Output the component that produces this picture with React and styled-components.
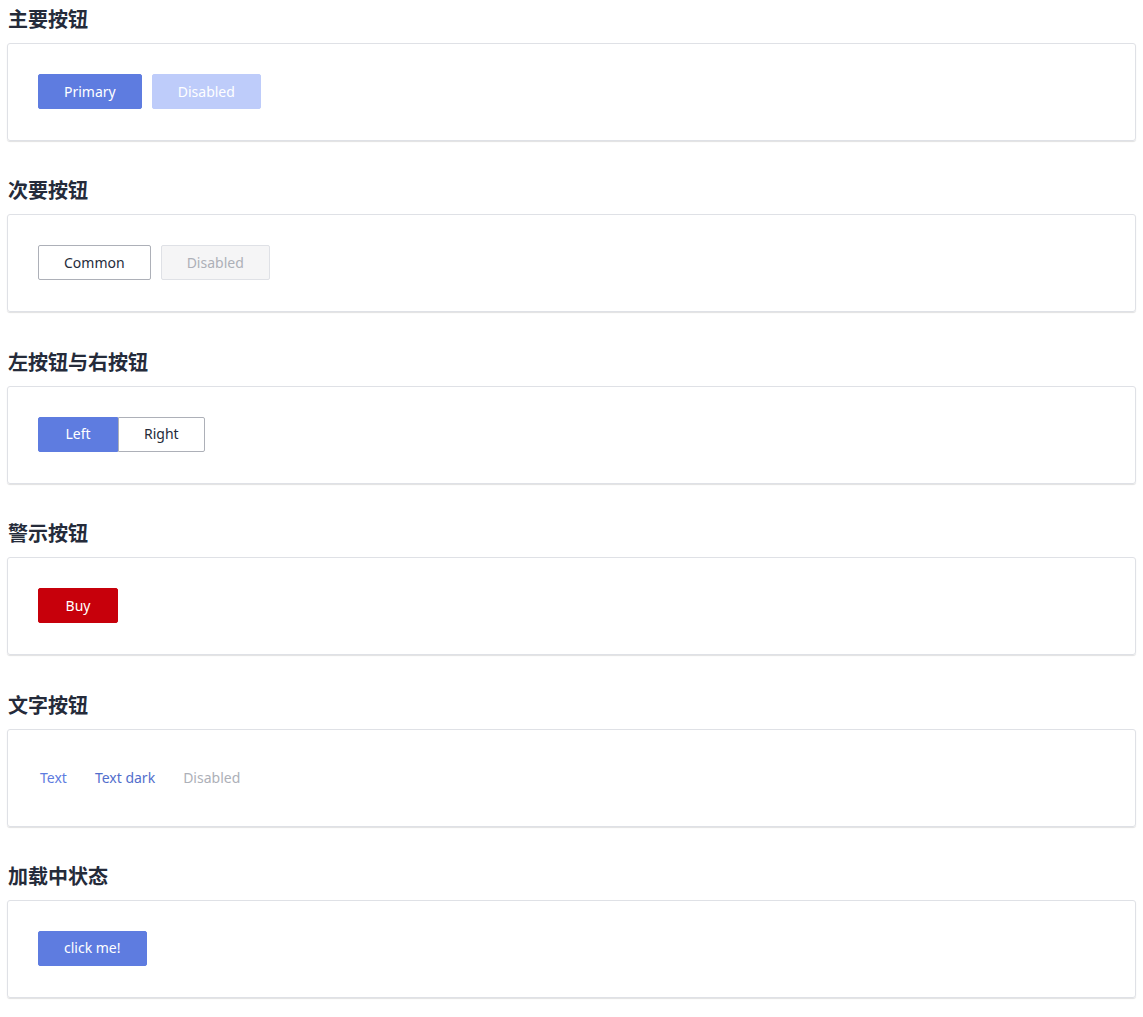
import React from "react";
import styled, { createGlobalStyle, css } from "styled-components";

const Global = createGlobalStyle`
  html, body { margin: 0; padding: 0; background: #fff; }
  body {
    font-family: "Noto Sans", "Noto Sans CJK SC", sans-serif;
    color: #252b3a;
  }
`;

const Page = styled.div`
  padding: 7px 7px 20px 7px;
  display: flex;
  flex-direction: column;
  gap: 37.4px;
`;

const Section = styled.section`
  display: flex;
  flex-direction: column;
  gap: 12px;
`;

const Title = styled.h3`
  margin: 0;
  font-family: "Noto Sans CJK SC", sans-serif;
  font-size: 20px;
  line-height: 24px;
  font-weight: 700;
  color: #252b3a;
  padding-left: 1px;
`;

const Card = styled.div`
  border: 1px solid #dfe1e6;
  border-radius: 3px;
  box-shadow: 0 1px 1px rgba(0, 0, 0, 0.12);
  padding: 30px 30px 31px 30px;
  display: flex;
  align-items: center;
  gap: ${(p) => p.$gap ?? 10}px;
`;

const variants = {
  primary: css`
    background: #5e7ce0;
    border-color: #5e7ce0;
    color: #fff;
  `,
  primaryDisabled: css`
    background: #beccfa;
    border-color: #beccfa;
    color: #fff;
  `,
  common: css`
    background: #fff;
    border-color: #adb0b8;
    color: #252b3a;
  `,
  commonDisabled: css`
    background: #f5f5f6;
    border-color: #dfe1e6;
    color: #adb0b8;
  `,
  danger: css`
    background: #c7000b;
    border-color: #c7000b;
    color: #fff;
  `,
};

const Button = styled.button`
  box-sizing: border-box;
  height: 35px;
  min-width: 80px;
  padding: 0 25px;
  border: 1px solid transparent;
  border-radius: 2px;
  font-family: "Noto Sans", "Noto Sans CJK SC", sans-serif;
  font-size: 14px;
  line-height: 1;
  cursor: pointer;
  ${(p) => variants[p.$variant]}
  ${(p) =>
    p.$left &&
    css`
      border-top-right-radius: 0;
      border-bottom-right-radius: 0;
    `}
  ${(p) =>
    p.$right &&
    css`
      border-top-left-radius: 0;
      border-bottom-left-radius: 0;
    `}
`;

const TextButton = styled.button`
  background: none;
  border: none;
  height: 35px;
  padding: 0 2px;
  font-family: "Noto Sans", "Noto Sans CJK SC", sans-serif;
  font-size: 14px;
  color: ${(p) => (p.$disabled ? "#adb0b8" : p.$dark ? "#526ecc" : "#5e7ce0")};
  cursor: ${(p) => (p.$disabled ? "not-allowed" : "pointer")};
`;

const Group = styled.div`
  display: flex;
`;

export default function App() {
  return (
    <>
      <Global />
      <Page>
        <Section>
          <Title>主要按钮</Title>
          <Card>
            <Button $variant="primary">Primary</Button>
            <Button $variant="primaryDisabled">Disabled</Button>
          </Card>
        </Section>
        <Section>
          <Title>次要按钮</Title>
          <Card>
            <Button $variant="common">Common</Button>
            <Button $variant="commonDisabled">Disabled</Button>
          </Card>
        </Section>
        <Section>
          <Title>左按钮与右按钮</Title>
          <Card>
            <Group>
              <Button $variant="primary" $left>Left</Button>
              <Button $variant="common" $right>Right</Button>
            </Group>
          </Card>
        </Section>
        <Section>
          <Title>警示按钮</Title>
          <Card>
            <Button $variant="danger">Buy</Button>
          </Card>
        </Section>
        <Section>
          <Title>文字按钮</Title>
          <Card $gap={24}>
            <TextButton>Text</TextButton>
            <TextButton $dark>Text dark</TextButton>
            <TextButton $disabled>Disabled</TextButton>
          </Card>
        </Section>
        <Section>
          <Title>加载中状态</Title>
          <Card>
            <Button $variant="primary">click me!</Button>
          </Card>
        </Section>
      </Page>
    </>
  );
}
